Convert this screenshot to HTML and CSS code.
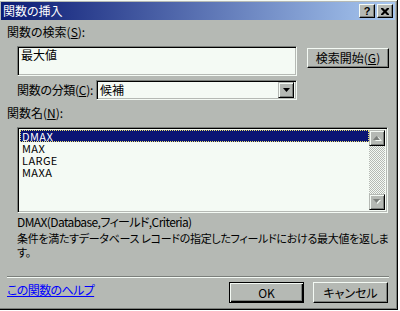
FILE: index.html
```html
<!DOCTYPE html>
<html lang="ja">
<head>
    <meta charset="UTF-8">
    <title>関数の挿入</title>
    <link rel="stylesheet" href="styles.css">
</head>
<body>
    <div class="window">
        <div class="titlebar">
            <span class="title">関数の挿入</span>
            <div class="caption-buttons">
                <button class="cap-btn help">?</button>
                <button class="cap-btn close">
                    <svg width="8" height="7" viewBox="0 0 8 7">
                        <path d="M0 0h2l2 2l2-2h2v1l-2.5 2.5l2.5 2.5v1h-2l-2-2l-2 2h-2v-1l2.5-2.5l-2.5-2.5z" fill="#000"/>
                    </svg>
                </button>
            </div>
        </div>

        <div class="content">
            <div class="label">関数の検索(<u>S</u>):</div>
            <div class="search-row">
                <div class="textbox">最大値</div>
                <button class="btn search-btn">検索開始(<u>G</u>)</button>
            </div>

            <div class="category-row">
                <span class="label category-label">関数の分類(<u>C</u>):</span>
                <div class="select">
                    <span class="select-value">候補</span>
                    <span class="drop">
                        <svg width="7" height="4" viewBox="0 0 7 4"><path d="M0 0h7l-3.5 4z" fill="#000"/></svg>
                    </span>
                </div>
            </div>

            <div class="label names-label">関数名(<u>N</u>):</div>
            <div class="listbox">
                <ul class="items">
                    <li class="selected">DMAX</li>
                    <li>MAX</li>
                    <li>LARGE</li>
                    <li>MAXA</li>
                </ul>
                <div class="scrollbar">
                    <span class="sb-btn">
                        <svg width="9" height="6" viewBox="0 0 9 6"><path d="M1 5h7l-3.5-4z" fill="#f4faf4" transform="translate(1 1)"/><path d="M0 5h7l-3.5-4z" fill="#7b7f7b"/></svg>
                    </span>
                    <span class="sb-track"></span>
                    <span class="sb-btn">
                        <svg width="9" height="6" viewBox="0 0 9 6"><path d="M0 0h7l-3.5 4z" fill="#f4faf4" transform="translate(1 1)"/><path d="M0 0h7l-3.5 4z" fill="#7b7f7b"/></svg>
                    </span>
                </div>
            </div>

            <div class="syntax">DMAX(Database,フィールド,Criteria)</div>
            <p class="desc">条件を満たすデータベース レコードの指定したフィールドにおける最大値を返しま<br>す。</p>

            <div class="separator"></div>

            <div class="footer">
                <a class="help-link" href="#">この関数のヘルプ</a>
                <div class="buttons">
                    <button class="btn default">OK</button>
                    <button class="btn">キャンセル</button>
                </div>
            </div>
        </div>
    </div>
</body>
</html>
```

FILE: styles.css
```css
:root {
    --face: #b5b9b4;
    --light: #f4faf4;
    --shadow: #7b7f7b;
    --field: #f4faf4;
    --select: #0a1474;
}

* {
    margin: 0;
    padding: 0;
    box-sizing: border-box;
}

body {
    width: 400px;
    height: 311px;
    overflow: hidden;
    background: #fff;
    font-family: "Noto Sans CJK JP", "Noto Sans", sans-serif;
    font-size: 12px;
    line-height: 14px;
    color: #000;
    font-feature-settings: "palt";
}

button {
    font: inherit;
    color: #000;
    cursor: default;
}

.window {
    width: 398px;
    height: 310px;
    padding-top: 2px;
    background: var(--face);
    border-right: 1px solid #000;
    border-bottom: 1px solid #000;
    box-shadow: inset 0 1px var(--light), inset -1px -1px var(--shadow);
}

/* title bar */
.titlebar {
    height: 18px;
    margin: 0 2px 0 1px;
    padding: 0 2px;
    display: flex;
    align-items: center;
    justify-content: space-between;
    background: linear-gradient(to right, #0a1a74, #a8c8f0);
}

.title {
    color: #fff;
    line-height: 18px;
}

.caption-buttons {
    display: flex;
    gap: 2px;
}

.cap-btn {
    width: 16px;
    height: 14px;
    display: flex;
    align-items: center;
    justify-content: center;
    background: var(--face);
    border: 1px solid;
    border-color: var(--light) #000 #000 var(--light);
    box-shadow: inset -1px -1px var(--shadow);
}

.cap-btn.help {
    font-family: "Liberation Sans", sans-serif;
    font-weight: bold;
    font-size: 11px;
    line-height: 12px;
}

/* shared 3d styles */
.btn {
    display: flex;
    align-items: center;
    justify-content: center;
    background: var(--face);
    border: 1px solid;
    border-color: var(--light) #000 #000 var(--light);
    box-shadow: inset -1px -1px var(--shadow);
}

.btn.default {
    border: 1px solid #000;
    box-shadow: inset 1px 1px var(--light), inset -1px -1px #000, inset -2px -2px var(--shadow);
}

.textbox, .select, .listbox {
    background: var(--field);
    border: 1px solid;
    border-color: var(--shadow) var(--light) var(--light) var(--shadow);
    box-shadow: inset 1px 1px #000, inset -1px -1px var(--face);
}

/* content */
.content {
    padding: 5px 8px 0 7px;
}

.search-row {
    display: flex;
    align-items: flex-start;
    gap: 10px;
    margin: 7px 0 0 10px;
}

.textbox {
    width: 280px;
    height: 30px;
    padding: 1px 0 0 3px;
}

.search-btn {
    width: 82px;
    height: 20px;
    margin-top: 2px;
}

.category-row {
    display: flex;
    align-items: center;
    margin: 4px 0 0 10px;
}

.category-label {
    width: 79px;
    letter-spacing: -0.3px;
}

.select {
    width: 201px;
    height: 20px;
    display: flex;
    align-items: center;
    justify-content: space-between;
    padding: 2px;
}

.select-value {
    padding-left: 1px;
}

.drop {
    width: 16px;
    height: 16px;
    display: flex;
    align-items: center;
    justify-content: center;
    background: var(--face);
    border: 1px solid;
    border-color: var(--face) #000 #000 var(--face);
    box-shadow: inset 1px 1px var(--light), inset -1px -1px var(--shadow);
}

.names-label {
    margin-top: 6px;
}

.listbox {
    width: 371px;
    height: 86px;
    margin: 7px 0 0 10px;
    padding: 1px;
    display: flex;
}

.items {
    flex: 1;
    list-style: none;
    margin: 1px 0 0 1px;
}

.items li {
    height: 12px;
    font-size: 11px;
    line-height: 12px;
    letter-spacing: 0.4px;
    padding-left: 2px;
}

.items li.selected {
    background: var(--select);
    color: #fff;
    outline: 1px dotted #e8e070;
    outline-offset: -1px;
}

.scrollbar {
    width: 16px;
    margin: 1px 1px 1px 0;
    display: flex;
    flex-direction: column;
}

.sb-btn {
    width: 16px;
    height: 16px;
    display: flex;
    align-items: center;
    justify-content: center;
    background: var(--face);
    border: 1px solid;
    border-color: var(--face) #000 #000 var(--face);
    box-shadow: inset 1px 1px var(--light), inset -1px -1px var(--shadow);
}

.sb-track {
    flex: 1;
    background-color: var(--light);
    background-image: conic-gradient(var(--face) 25%, transparent 0 50%, var(--face) 0 75%, transparent 0);
    background-size: 2px 2px;
}

.syntax {
    margin: 2px 0 0 10px;
    letter-spacing: -0.6px;
}

.desc {
    margin: 2px 0 0 10px;
    font-size: 11px;
    letter-spacing: -0.3px;
    white-space: nowrap;
}

.separator {
    height: 2px;
    margin-top: 17px;
    border-top: 1px solid var(--shadow);
    border-bottom: 1px solid var(--light);
}

.footer {
    display: flex;
    justify-content: space-between;
    align-items: flex-start;
    margin-top: 4px;
}

.help-link {
    margin-top: 1px;
    color: #0000ff;
    text-decoration: underline;
    letter-spacing: -0.6px;
}

.buttons {
    display: flex;
    gap: 9px;
    margin-right: 1px;
}

.buttons .btn {
    width: 75px;
    height: 21px;
}
```
